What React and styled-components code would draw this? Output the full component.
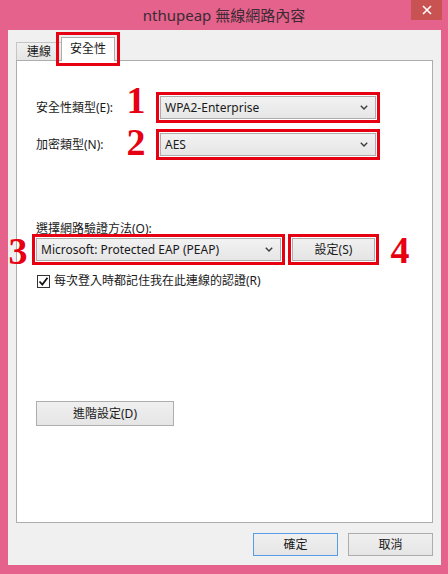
import React from 'react';
import styled, { createGlobalStyle, css } from 'styled-components';

const RED = '#e60012';

const GlobalStyle = createGlobalStyle`
  html, body {
    margin: 0;
    padding: 0;
    background: #e4628c;
  }
  body {
    font-family: "Noto Sans", "Noto Sans CJK TC", sans-serif;
    font-size: 12px;
    color: #1a1a1a;
  }
`;

const annotated = css`
  outline: 3px solid ${RED};
  outline-offset: 1px;
`;

const Window = styled.div`
  width: 448px;
  height: 574px;
  display: flex;
  flex-direction: column;
  background: #e4628c;
  box-sizing: border-box;
`;

const TitleBar = styled.div`
  height: 30px;
  flex: none;
  display: grid;
  grid-template-columns: 1fr auto 1fr;
  align-items: start;
  padding: 0 6px;
`;

const Title = styled.div`
  grid-column: 2;
  margin-top: 5px;
  font-size: 15px;
  line-height: 20px;
  color: #3b2a33;
  white-space: nowrap;
`;

const CloseButton = styled.div`
  grid-column: 3;
  justify-self: end;
  width: 31px;
  height: 20px;
  background: #c95252;
  display: flex;
  align-items: center;
  justify-content: center;
`;

const Client = styled.div`
  flex: 1;
  margin: 0 7px 9px 8px;
  background: #f0f0f0;
  padding: 7px 8px 9px 8px;
  display: flex;
  flex-direction: column;
`;

const TabStrip = styled.div`
  display: flex;
  align-items: flex-end;
  height: 23px;
  flex: none;
`;

const Tab = styled.div`
  box-sizing: border-box;
  border: 1px solid #adadad;
  border-bottom: none;
  display: flex;
  align-items: center;
  line-height: 16px;
  ${p => p.$active ? css`
    height: 24px;
    margin-bottom: -1px;
    padding: 0 8px 2px;
    background: #fff;
    position: relative;
    z-index: 1;
    outline: 3px solid ${RED};
    outline-offset: 2px;
  ` : css`
    height: 18px;
    padding: 0 10px;
    background: linear-gradient(#f0f0f0, #e5e5e5);
    border-right: none;
    border-color: #c5c5c5;
  `}
`;

const Panel = styled.div`
  flex: 1;
  background: #fff;
  border: 1px solid #adadad;
  padding: 35px 18px 0 19px;
  display: flex;
  flex-direction: column;
`;

const FieldRow = styled.div`
  display: flex;
  align-items: center;
  height: 23px;
  margin-bottom: ${p => p.$gap || 0}px;
`;

const Label = styled.div`
  width: ${p => p.$width || 'auto'};
  flex: none;
  line-height: 16px;
  white-space: nowrap;
`;

const Number = styled.div`
  width: 28px;
  flex: none;
  text-align: center;
  font-family: "Liberation Serif", serif;
  font-size: 38px;
  font-weight: bold;
  line-height: 23px;
  height: 23px;
  color: ${RED};
  transform: translateY(${p => -(p.$raise || 0)}px);
`;

const SideNumber = styled(Number)`
  position: absolute;
  right: calc(100% + 5px);
  top: 0;
`;

const ComboBox = styled.div`
  box-sizing: border-box;
  width: ${p => p.$width}px;
  height: 23px;
  margin-left: ${p => p.$offset || 0}px;
  border: 1px solid #acacac;
  background: linear-gradient(#f2f2f2, #e6e6e6);
  display: flex;
  align-items: center;
  justify-content: space-between;
  padding: 0 7px 0 4px;
  position: relative;
  line-height: 16px;
  white-space: nowrap;
  ${p => p.$annotated && annotated}
`;

const Button = styled.div`
  box-sizing: border-box;
  width: ${p => p.$width}px;
  height: ${p => p.$height || 23}px;
  border: 1px solid ${p => (p.$default ? '#569de5' : '#adadad')};
  background: linear-gradient(#f0f0f0, #e5e5e5);
  display: flex;
  align-items: center;
  justify-content: center;
  line-height: 16px;
  white-space: nowrap;
  flex: none;
  ${p => p.$annotated && annotated}
`;

const MethodLabel = styled(Label)`
  margin-top: 65px;
  margin-bottom: 1px;
`;

const MethodRow = styled.div`
  display: flex;
  align-items: center;
  height: 23px;
  gap: 11px;
`;

const CheckRow = styled.label`
  display: flex;
  align-items: center;
  gap: 4px;
  height: 16px;
  margin-top: 12px;
  margin-left: 1px;
  line-height: 16px;
`;

const CheckBox = styled.span`
  box-sizing: border-box;
  width: 13px;
  height: 13px;
  border: 1px solid #333;
  background: #fff;
  display: flex;
  align-items: center;
  justify-content: center;
`;

const AdvancedButton = styled(Button)`
  margin-top: 112px;
`;

const Footer = styled.div`
  display: flex;
  justify-content: flex-end;
  gap: 10px;
  margin-top: 10px;
  flex: none;
`;

const Chevron = () => (
  <svg width="8" height="5" viewBox="0 0 8 5">
    <path d="M0.8 0.8 L4 4 L7.2 0.8" fill="none" stroke="#3c3c3c" strokeWidth="1.4" />
  </svg>
);

const App = () => (
  <>
    <GlobalStyle />
    <Window>
      <TitleBar>
        <Title>nthupeap 無線網路內容</Title>
        <CloseButton>
          <svg width="10" height="10" viewBox="0 0 10 10">
            <path d="M1 1 L9 9 M9 1 L1 9" stroke="#fff" strokeWidth="1.6" />
          </svg>
        </CloseButton>
      </TitleBar>
      <Client>
        <TabStrip>
          <Tab>連線</Tab>
          <Tab $active>安全性</Tab>
        </TabStrip>
        <Panel>
          <FieldRow $gap={14}>
            <Label $width="86px">安全性類型(E):</Label>
            <Number $raise={7}>1</Number>
            <ComboBox $width={216} $offset={10} $annotated>
              WPA2-Enterprise
              <Chevron />
            </ComboBox>
          </FieldRow>
          <FieldRow>
            <Label $width="86px">加密類型(N):</Label>
            <Number $raise={2}>2</Number>
            <ComboBox $width={216} $offset={10} $annotated>
              AES
              <Chevron />
            </ComboBox>
          </FieldRow>

          <MethodLabel>選擇網路驗證方法(O):</MethodLabel>
          <MethodRow>
            <ComboBox $width={248} $annotated>
              <SideNumber $raise={-1}>3</SideNumber>
              Microsoft: Protected EAP (PEAP)
              <Chevron />
            </ComboBox>
            <Button $width={83} $annotated>設定(S)</Button>
            <Number $raise={-1}>4</Number>
          </MethodRow>
          <CheckRow>
            <CheckBox>
              <svg width="11" height="11" viewBox="0 0 11 11">
                <path d="M1.5 5.5 L4.3 8.5 L9.5 1.8" fill="none" stroke="#111" strokeWidth="1.8" />
              </svg>
            </CheckBox>
            每次登入時都記住我在此連線的認證(R)
          </CheckRow>
          <AdvancedButton $width={138} $height={25}>進階設定(D)</AdvancedButton>
        </Panel>
        <Footer>
          <Button $width={85} $default>確定</Button>
          <Button $width={85}>取消</Button>
        </Footer>
      </Client>
    </Window>
  </>
);

export default App;
